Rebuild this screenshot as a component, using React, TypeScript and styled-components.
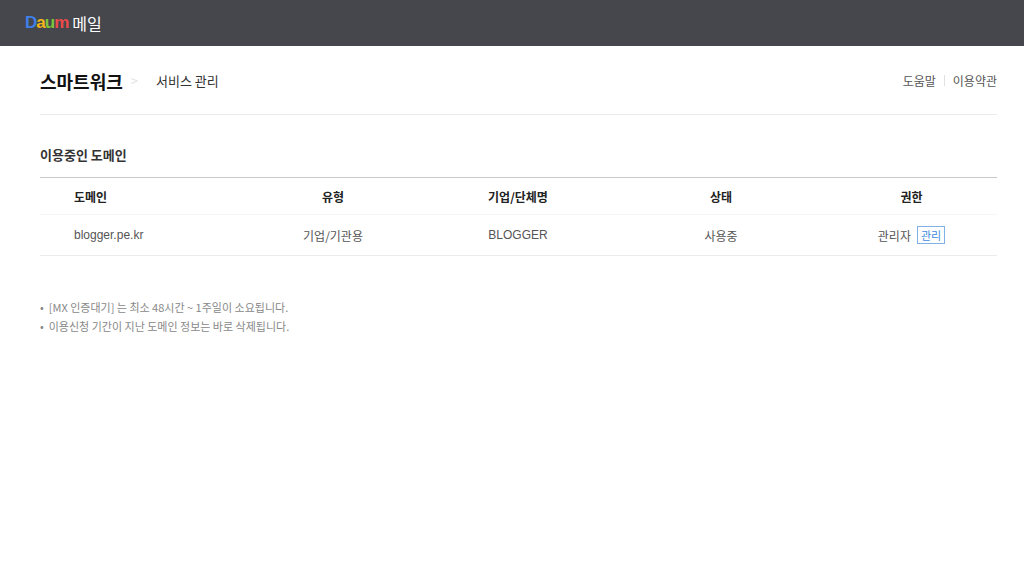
import React from 'react';
import styled, { createGlobalStyle } from 'styled-components';

const GlobalStyle = createGlobalStyle`
  body {
    margin: 0;
    background: #fff;
    font-family: 'Noto Sans CJK KR', 'Noto Sans', sans-serif;
    color: #222;
  }
`;

const TopBar = styled.div`
  height: 46px;
  background: #45474c;
  display: flex;
  align-items: center;
  padding-left: 25px;
  gap: 4px;
`;

const Logo = styled.span`
  font-family: 'Liberation Sans', sans-serif;
  font-weight: 700;
  font-size: 17px;
  letter-spacing: -1px;
`;

const LogoChar = styled.span<{ $c: string }>`
  color: ${(p) => p.$c};
`;

const MailText = styled.span`
  color: #fff;
  font-size: 16px;
`;

const Content = styled.div`
  padding: 0 27px 0 40px;
`;

const TitleRow = styled.div`
  height: 67px;
  display: flex;
  align-items: center;
  justify-content: space-between;
  border-bottom: 1px solid #ececec;
  padding-top: 1px;
`;

const Crumbs = styled.div`
  display: flex;
  align-items: center;
`;

const Title = styled.span`
  font-size: 18px;
  font-weight: 700;
  color: #111;
`;

const Chevron = styled.span`
  color: #e4e4e4;
  font-size: 13px;
  margin: 0 18px 0 8px;
`;

const SubTitle = styled.span`
  font-size: 13px;
  color: #333;
`;

const Links = styled.div`
  display: flex;
  align-items: center;
  gap: 8px;
  font-size: 12px;
  color: #555;
`;

const Sep = styled.span`
  width: 1px;
  height: 11px;
  background: #e0e0e0;
`;

const SectionTitle = styled.div`
  font-size: 13px;
  font-weight: 700;
  color: #333;
  margin-top: 30px;
  margin-bottom: 13px;
`;

const Table = styled.div`
  border-top: 1px solid #c9c9c9;
  border-bottom: 1px solid #ececec;
`;

const Row = styled.div<{ $head?: boolean }>`
  display: grid;
  grid-template-columns: 190px 206px 164px 242px 1fr;
  align-items: center;
  height: ${(p) => (p.$head ? '36px' : '40px')};
  font-size: 12px;
  font-weight: ${(p) => (p.$head ? 700 : 400)};
  color: ${(p) => (p.$head ? '#222' : '#555')};
  ${(p) => (p.$head ? 'border-bottom: 1px solid #f6f6f6;' : '')}
`;

const Cell = styled.div<{ $left?: boolean }>`
  text-align: ${(p) => (p.$left ? 'left' : 'center')};
  padding-left: ${(p) => (p.$left ? '34px' : '0')};
  display: flex;
  justify-content: ${(p) => (p.$left ? 'flex-start' : 'center')};
  align-items: center;
  gap: 6px;
`;

const LastCell = styled(Cell)`
  padding-right: 16px;
`;

const Latin = styled.span`
  font-family: 'Liberation Sans', sans-serif;
`;

const ManageBtn = styled.span`
  border: 1px solid #7fb0e8;
  color: #3d8ae0;
  font-size: 11px;
  padding: 1px 3px;
  line-height: 14px;
`;

const Notes = styled.ul`
  list-style: none;
  margin: 42px 0 0;
  padding: 0;
  font-size: 11px;
  color: #888;
  line-height: 19px;
`;

const Note = styled.li`
  &::before {
    content: '•';
    margin-right: 5px;
  }
`;

export default function App() {
  return (
    <>
      <GlobalStyle />
      <TopBar>
        <Logo>
          <LogoChar $c="#3f7fe8">D</LogoChar>
          <LogoChar $c="#f2b51a">a</LogoChar>
          <LogoChar $c="#7cc43a">u</LogoChar>
          <LogoChar $c="#ec4b4b">m</LogoChar>
        </Logo>
        <MailText>메일</MailText>
      </TopBar>
      <Content>
        <TitleRow>
          <Crumbs>
            <Title>스마트워크</Title>
            <Chevron>&gt;</Chevron>
            <SubTitle>서비스 관리</SubTitle>
          </Crumbs>
          <Links>
            <span>도움말</span>
            <Sep />
            <span>이용약관</span>
          </Links>
        </TitleRow>
        <SectionTitle>이용중인 도메인</SectionTitle>
        <Table>
          <Row $head>
            <Cell $left>도메인</Cell>
            <Cell>유형</Cell>
            <Cell>기업/단체명</Cell>
            <Cell>상태</Cell>
            <LastCell>권한</LastCell>
          </Row>
          <Row>
            <Cell $left>
              <Latin>blogger.pe.kr</Latin>
            </Cell>
            <Cell>기업/기관용</Cell>
            <Cell>
              <Latin>BLOGGER</Latin>
            </Cell>
            <Cell>사용중</Cell>
            <LastCell>
              관리자 <ManageBtn>관리</ManageBtn>
            </LastCell>
          </Row>
        </Table>
        <Notes>
          <Note>[MX 인증대기] 는 최소 48시간 ~ 1주일이 소요됩니다.</Note>
          <Note>이용신청 기간이 지난 도메인 정보는 바로 삭제됩니다.</Note>
        </Notes>
      </Content>
    </>
  );
}
